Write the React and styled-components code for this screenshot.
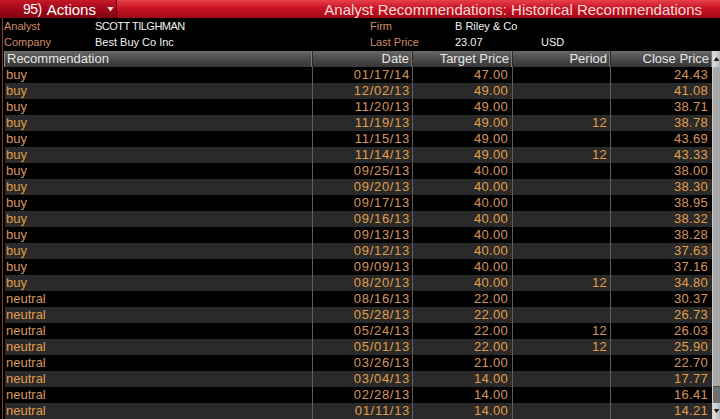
import React from "react";
import styled, { createGlobalStyle } from "styled-components";

const Global = createGlobalStyle`
  html, body { margin: 0; padding: 0; background: #000; }
  body { font-family: "Liberation Sans", Arial, sans-serif; overflow: hidden; }
`;

const Screen = styled.div`
  width: 720px;
  height: 419px;
  background: #000;
  overflow: hidden;
  display: flex;
  flex-direction: column;
`;

const TitleBar = styled.div`
  height: 18px;
  flex: none;
  display: flex;
  align-items: center;
  justify-content: space-between;
  background: linear-gradient(#e8404c 0%, #c81424 45%, #a00814 100%);
`;

const ActionsButton = styled.div`
  height: 18px;
  width: 117px;
  box-sizing: border-box;
  display: flex;
  align-items: center;
  padding-left: 23px;
  gap: 5px;
  color: #fff;
  font-size: 15px;
  background: linear-gradient(#c81828 0%, #a00818 50%, #800410 100%);
  border-right: 1px solid #600008;
`;

const Num = styled.span`
  font-size: 14px;
  letter-spacing: -0.5px;
`;

const Caret = styled.span`
  margin-left: 6px;
  width: 7px;
  height: 5px;
  background: #f4e0e0;
  display: inline-block;
  clip-path: polygon(0 0, 100% 0, 50% 100%);
`;

const Title = styled.div`
  color: #f6dada;
  font-size: 15px;
  padding-right: 18px;
  white-space: nowrap;
`;

const Body = styled.div`
  flex: 1;
  margin-left: 2px;
  border-left: 1px solid #8a3a28;
  display: flex;
  flex-direction: column;
  min-height: 0;
`;

const InfoRow = styled.div`
  height: 16px;
  display: grid;
  grid-template-columns: 91px 275px 85px 86px auto;
  padding-left: 1px;
  align-items: center;
  font-size: 11px;
  white-space: nowrap;
`;

const Label = styled.span`
  color: #d08a68;
`;

const Value = styled.span`
  color: #f2f2f2;
  font-size: 11px;
  letter-spacing: ${(p) => (p.$caps ? "-0.5px" : "0")};
`;

const Main = styled.div`
  margin-top: 1px;
  flex: 1;
  display: flex;
  min-height: 0;
`;

const Table = styled.div`
  margin-left: 1px;
  width: 708px;
  display: flex;
  flex-direction: column;
`;

const COLS = "308px 100px 100px 98px 102px";

const HeaderRow = styled.div`
  height: 16px;
  display: grid;
  grid-template-columns: ${COLS};
  background: linear-gradient(#6a6a6a 0%, #4a4a4a 50%, #363636 100%);
  border-left: 1px solid #8a8a8a;
  box-sizing: border-box;
`;

const HeadCell = styled.div`
  color: #e6e6e6;
  font-size: 13px;
  line-height: 16px;
  padding: 0 ${(p) => (p.$left ? "0 0 2px" : "3px 0 0")};
  text-align: ${(p) => (p.$left ? "left" : "right")};
  border-right: 1px solid #2a2a2a;
  box-shadow: inset -1px 0 0 #7a7a7a;
  white-space: nowrap;
  overflow: hidden;
`;

const Row = styled.div`
  height: 16px;
  display: grid;
  grid-template-columns: ${COLS};
  background: ${(p) => (p.$alt ? "#2a2a2a" : "#000")};
  color: ${(p) => (p.$alt ? "#e09e48" : "#d6955c")};
  margin-left: 1px;
`;

const Cell = styled.div`
  font-size: 13px;
  line-height: 16px;
  white-space: nowrap;
  overflow: hidden;
  text-align: ${(p) => (p.$left ? "left" : "right")};
  padding: ${(p) => (p.$left ? "0 0 0 1px" : `0 ${p.$pad || 3}px 0 0`)};
  letter-spacing: ${(p) => p.$ls || "0"};
  border-right: ${(p) => (p.$last ? "none" : "1px solid #5e5e5e")};
`;

const Scrollbar = styled.div`
  width: 9px;
  display: flex;
  flex-direction: column;
  background: #a8a8a8;
  border-left: 1px solid #d0d0d0;
  box-sizing: border-box;
`;

const Arrow = styled.div`
  height: 16px;
  flex: none;
  background: linear-gradient(90deg, #e0e0e0, #b8b8b8);
  display: flex;
  align-items: center;
  justify-content: center;
  &::after {
    content: "";
    width: 6px;
    height: 4px;
    background: #202020;
    clip-path: ${(p) =>
      p.$down ? "polygon(0 0, 100% 0, 50% 100%)" : "polygon(50% 0, 100% 100%, 0 100%)"};
  }
`;

const Track = styled.div`
  flex: 1;
  display: flex;
  flex-direction: column;
  justify-content: flex-end;
`;

const Thumb = styled.div`
  height: 16px;
  background: #707070;
  border-top: 1px solid #505050;
`;

const rows = [
  ["buy", "01/17/14", "47.00", "", "24.43"],
  ["buy", "12/02/13", "49.00", "", "41.08"],
  ["buy", "11/20/13", "49.00", "", "38.71"],
  ["buy", "11/19/13", "49.00", "12", "38.78"],
  ["buy", "11/15/13", "49.00", "", "43.69"],
  ["buy", "11/14/13", "49.00", "12", "43.33"],
  ["buy", "09/25/13", "40.00", "", "38.00"],
  ["buy", "09/20/13", "40.00", "", "38.30"],
  ["buy", "09/17/13", "40.00", "", "38.95"],
  ["buy", "09/16/13", "40.00", "", "38.32"],
  ["buy", "09/13/13", "40.00", "", "38.28"],
  ["buy", "09/12/13", "40.00", "", "37.63"],
  ["buy", "09/09/13", "40.00", "", "37.16"],
  ["buy", "08/20/13", "40.00", "12", "34.80"],
  ["neutral", "08/16/13", "22.00", "", "30.37"],
  ["neutral", "05/28/13", "22.00", "", "26.73"],
  ["neutral", "05/24/13", "22.00", "12", "26.03"],
  ["neutral", "05/01/13", "22.00", "12", "25.90"],
  ["neutral", "03/26/13", "21.00", "", "22.70"],
  ["neutral", "03/04/13", "14.00", "", "17.77"],
  ["neutral", "02/28/13", "14.00", "", "16.41"],
  ["neutral", "01/11/13", "14.00", "", "14.21"],
];

export default function App() {
  return (
    <Screen>
      <Global />
      <TitleBar>
        <ActionsButton>
          <Num>95)</Num>
          <span>Actions</span>
          <Caret />
        </ActionsButton>
        <Title>Analyst Recommendations: Historical Recommendations</Title>
      </TitleBar>
      <Body>
        <InfoRow>
          <Label>Analyst</Label>
          <Value $caps>SCOTT TILGHMAN</Value>
          <Label>Firm</Label>
          <Value>B Riley &amp; Co</Value>
          <span />
        </InfoRow>
        <InfoRow>
          <Label>Company</Label>
          <Value>Best Buy Co Inc</Value>
          <Label>Last Price</Label>
          <Value>23.07</Value>
          <Value>USD</Value>
        </InfoRow>
        <Main>
          <Table>
            <HeaderRow>
              <HeadCell $left>Recommendation</HeadCell>
              <HeadCell>Date</HeadCell>
              <HeadCell>Target Price</HeadCell>
              <HeadCell>Period</HeadCell>
              <HeadCell>Close Price</HeadCell>
            </HeaderRow>
            {rows.map((r, i) => (
              <Row key={i} $alt={i % 2 === 1}>
                <Cell $left>{r[0]}</Cell>
                <Cell $ls="0.7px" $pad={2}>{r[1]}</Cell>
                <Cell $ls="0.3px" $pad={4}>{r[2]}</Cell>
                <Cell $ls="0.3px">{r[3]}</Cell>
                <Cell $ls="0.3px" $pad={5} $last>{r[4]}</Cell>
              </Row>
            ))}
          </Table>
          <Scrollbar>
            <Arrow />
            <Track>
              <Thumb />
            </Track>
            <Arrow $down />
          </Scrollbar>
        </Main>
      </Body>
    </Screen>
  );
}
